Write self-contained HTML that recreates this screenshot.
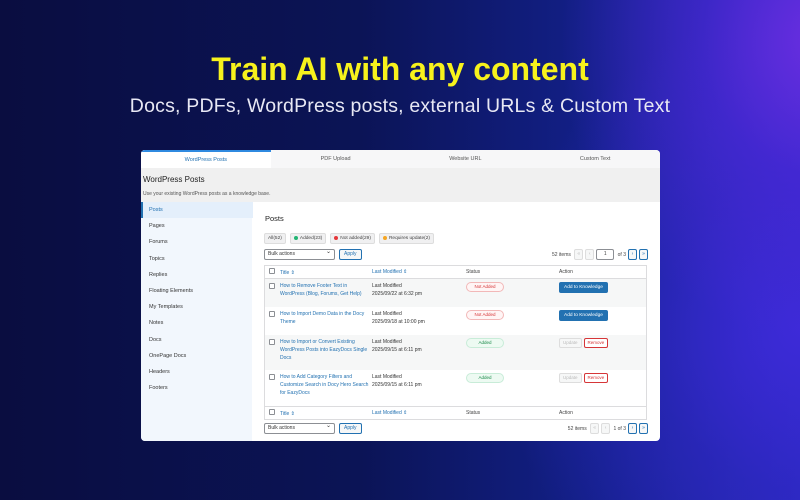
<!DOCTYPE html>
<html><head><style>
*{margin:0;padding:0;box-sizing:border-box}
body{width:800px;height:500px;overflow:hidden;font-family:"Liberation Sans",sans-serif;
background:radial-gradient(ellipse 260px 300px at 820px 40px,#6a2ee0 0%,rgba(80,40,220,0.6) 45%,rgba(40,30,170,0) 100%),
radial-gradient(ellipse 300px 320px at 800px 330px,#3d2ad8 0%,rgba(50,40,200,0.5) 50%,rgba(20,20,120,0) 100%),
linear-gradient(90deg,#0a0d40 0%,#0b1456 45%,#13208a 75%,#2a2ac0 100%);position:relative}
h1{position:absolute;top:51px;width:100%;text-align:center;color:#f7f21c;font-size:32px;font-weight:bold}
h2{position:absolute;top:95px;width:100%;text-align:center;color:#e8e8f4;font-size:19.5px;font-weight:normal;letter-spacing:.2px}
.panel{position:absolute;left:141px;top:150px;width:519px;height:291px;background:#fff;border-radius:4px;overflow:hidden;font-size:6px;color:#333}
.tabs{display:flex;height:18px;background:#f7f7f8}
.tabs div{flex:1;text-align:center;line-height:18px;color:#555;font-size:5.5px}
.tabs .a{background:#fff;color:#2271b1;border-top:2px solid #2f8ae0;line-height:16px}
.hd{height:34px;background:#f0f0f0;padding:7px 2px}
.hd b{font-size:8px;font-weight:normal;color:#222;display:block}
.hd span{font-size:5px;color:#555;display:block;margin-top:7px}
.side{position:absolute;left:0;top:52px;width:111px;bottom:0;background:#f2f7fd}
.side div{height:16.2px;line-height:16.2px;padding-left:8px;font-size:5.5px;color:#333}
.side .a{background:#e4effb;color:#2271b1;border-left:2px solid #2271b1;padding-left:6px;width:112px}
.main{position:absolute;left:111px;top:52px;right:0;bottom:0;padding:0 12px}
.ttl{position:absolute;top:12px;left:13px;font-size:7.5px;color:#222}
.flt{position:absolute;top:31px;left:12px;display:flex;gap:4px}
.flt span{background:#f0f0f1;border:1px solid #ddd;border-radius:2px;padding:0 3px;height:11px;line-height:10px;font-size:4.8px;color:#444}
.dot{display:inline-block;width:4px;height:4px;border-radius:50%;margin-right:2px;vertical-align:-0.5px}
.bulk{position:absolute;left:12px;display:flex;gap:4px}
.sel{width:71px;height:11px;border:1px solid #8c8f94;border-radius:2px;font-size:5px;line-height:9px;padding-left:3px;position:relative;background:#fff}
.sel:after{content:"⌄";position:absolute;right:3px;top:-2px;font-size:6px}
.btn{height:11px;border:1px solid #2271b1;color:#2271b1;border-radius:2px;font-size:5px;line-height:9px;padding:0 4px;background:#f6f7f7}
.pag{position:absolute;right:12px;display:flex;gap:2px;align-items:center;font-size:5px;color:#444}
.pg{width:9px;height:11px;border:1px solid #ddd;border-radius:2px;background:#f6f7f7;text-align:center;line-height:9px;color:#bbb}
.pg.b{border-color:#2271b1;color:#2271b1}
table{position:absolute;top:63px;left:12px;width:383px;border:1px solid #dcdcde;border-collapse:collapse;font-size:5px}
td,th{text-align:left;vertical-align:top;font-weight:normal;padding:0}
th{height:13px;vertical-align:middle;color:#444;border-bottom:1px solid #dcdcde}
tfoot th{border-bottom:0;border-top:1px solid #dcdcde}
.cb{width:6px;height:6px;border:1px solid #8c8f94;border-radius:1px;display:inline-block;margin:0 5px 0 4px;background:#fff}
.lnk{color:#2271b1}
td{padding-top:3px;line-height:8px}
tr.g td{background:#f6f7f7}
.t{color:#2271b1;width:92px}
.na{display:inline-block;width:38px;height:10px;border:1px solid #f2b8b8;border-radius:6px;background:#fff5f5;color:#d63638;text-align:center;line-height:8px;font-size:4.5px}
.ad{display:inline-block;width:38px;height:10px;border:1px solid #c8ecd8;border-radius:6px;background:#edfaf2;color:#1a8a4a;text-align:center;line-height:8px;font-size:4.5px}
.ak{display:inline-block;background:#2271b1;color:#fff;height:11px;line-height:11px;padding:0 5px;border-radius:2px;font-size:4.8px}
.up{display:inline-block;border:1px solid #ddd;color:#bbb;height:10px;line-height:8px;padding:0 3px;border-radius:2px;font-size:4.5px;background:#f6f7f7}
.rm{display:inline-block;border:1px solid #d63638;color:#d63638;height:10px;line-height:8px;padding:0 3px;border-radius:2px;font-size:4.5px;background:#fff;margin-left:2px}
</style></head><body>
<h1>Train AI with any content</h1>
<h2>Docs, PDFs, WordPress posts, external URLs &amp; Custom Text</h2>
<div class="panel">
<div class="tabs"><div class="a">WordPress Posts</div><div>PDF Upload</div><div>Website URL</div><div>Custom Text</div></div>
<div class="hd"><b>WordPress Posts</b><span>Use your existing WordPress posts as a knowledge base.</span></div>
<div class="side">
<div class="a">Posts</div><div>Pages</div><div>Forums</div><div>Topics</div><div>Replies</div><div>Floating Elements</div><div>My Templates</div><div>Notes</div><div>Docs</div><div>OnePage Docs</div><div>Headers</div><div>Footers</div>
</div>
<div class="main">
<div class="ttl">Posts</div>
<div class="flt"><span>All(52)</span><span><i class="dot" style="background:#22b573"></i>Added(23)</span><span><i class="dot" style="background:#e5383b"></i>Not added(29)</span><span><i class="dot" style="background:#f5a623"></i>Requires update(2)</span></div>
<div class="bulk" style="top:47px"><div class="sel">Bulk actions</div><div class="btn">Apply</div></div>
<div class="pag" style="top:47px">52 items&nbsp;<span class="pg">«</span><span class="pg">‹</span><span class="pg" style="width:18px;color:#444;background:#fff;border-color:#8c8f94">1</span>&nbsp;of 3 <span class="pg b">›</span><span class="pg b">»</span></div>
<table>
<thead><tr><th style="width:100px"><span class="cb"></span><span class="lnk">Title ⇕</span></th><th style="width:94px" class="lnk">Last Modified ⇕</th><th style="width:93px">Status</th><th>Action</th></tr></thead>
<tbody>
<tr class="g" style="height:28px"><td><span class="cb" style="float:left;margin-top:1px"></span><div class="t" style="margin-left:15px">How to Remove Footer Text in WordPress (Blog, Forums, Get Help)</div></td><td>Last Modified<br>2025/09/22 at 6:32 pm</td><td><span class="na">Not Added</span></td><td><span class="ak">Add to Knowledge</span></td></tr>
<tr style="height:28px"><td><span class="cb" style="float:left;margin-top:1px"></span><div class="t" style="margin-left:15px">How to Import Demo Data in the Docy Theme</div></td><td>Last Modified<br>2025/09/18 at 10:00 pm</td><td><span class="na">Not Added</span></td><td><span class="ak">Add to Knowledge</span></td></tr>
<tr class="g" style="height:35px"><td><span class="cb" style="float:left;margin-top:1px"></span><div class="t" style="margin-left:15px">How to Import or Convert Existing WordPress Posts into EazyDocs Single Docs</div></td><td>Last Modified<br>2025/09/15 at 6:11 pm</td><td><span class="ad">Added</span></td><td><span class="up">Update</span><span class="rm">Remove</span></td></tr>
<tr style="height:37px"><td><span class="cb" style="float:left;margin-top:1px"></span><div class="t" style="margin-left:15px">How to Add Category Filters and Customize Search in Docy Hero Search for EazyDocs</div></td><td>Last Modified<br>2025/09/15 at 6:11 pm</td><td><span class="ad">Added</span></td><td><span class="up">Update</span><span class="rm">Remove</span></td></tr>
</tbody>
<tfoot><tr><th><span class="cb"></span><span class="lnk">Title ⇕</span></th><th class="lnk">Last Modified ⇕</th><th>Status</th><th>Action</th></tr></tfoot>
</table>
<div class="bulk" style="top:221px"><div class="sel">Bulk actions</div><div class="btn">Apply</div></div>
<div class="pag" style="top:221px">52 items&nbsp;<span class="pg">«</span><span class="pg">‹</span>&nbsp;1 of 3 <span class="pg b">›</span><span class="pg b">»</span></div>
</div>
</div>
</body></html>
